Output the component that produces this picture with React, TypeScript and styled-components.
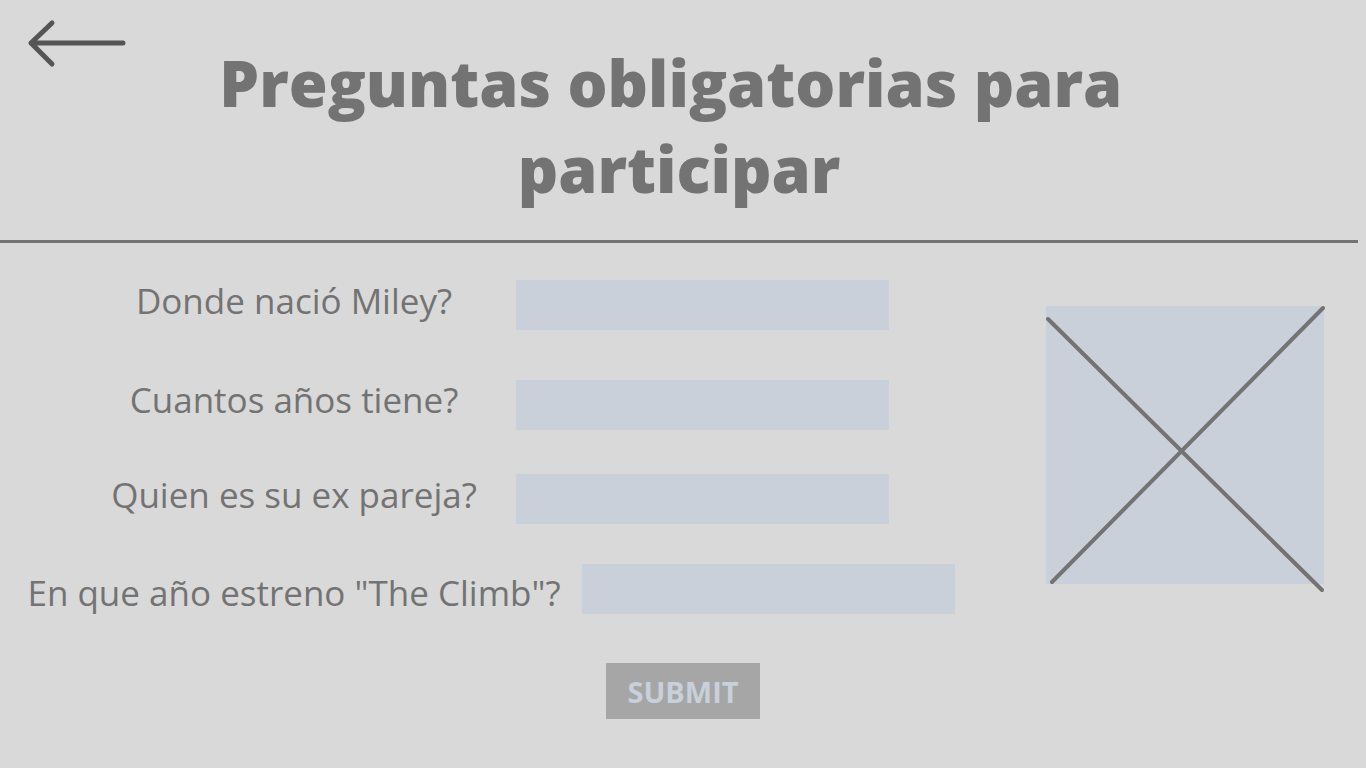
import React from "react";
import styled, { createGlobalStyle } from "styled-components";

const GlobalStyle = createGlobalStyle`
  html, body {
    margin: 0;
    padding: 0;
    background: #d9d9d9;
  }
  body {
    font-family: "Open Sans", "Liberation Sans", sans-serif;
  }
  * { box-sizing: border-box; }
`;

const Page = styled.div`
  width: 1366px;
  min-height: 768px;
  background: #d9d9d9;
  color: #737373;
  font-family: "Open Sans", "Liberation Sans", sans-serif;
  overflow: hidden;
`;

const Header = styled.header`
  display: grid;
  padding-top: 18px;
`;

const BackButton = styled.button`
  grid-area: 1 / 1;
  justify-self: start;
  align-self: start;
  margin-left: 25px;
  padding: 0;
  border: 0;
  background: none;
  cursor: pointer;
  width: 104px;
  height: 52px;
  display: block;
  svg { display: block; }
`;

const Title = styled.h1`
  grid-area: 1 / 1;
  margin: 22px 0 0;
  padding-right: 8px;
  text-align: center;
  font-family: "Open Sans", "Liberation Sans", sans-serif;
  font-weight: 800;
  font-size: 63px;
  line-height: 86px;
  color: #737373;
`;

const Divider = styled.hr`
  margin: 28px 0 0;
  width: 1358px;
  height: 3px;
  border: 0;
  background: #737373;
`;

const Main = styled.main`
  display: flex;
  align-items: flex-start;
`;

const Form = styled.div`
  flex: 0 0 auto;
  display: flex;
  flex-direction: column;
  padding-left: 78px;
`;

const Row = styled.div<{ $gap: number }>`
  display: flex;
  align-items: flex-start;
  height: 50px;
  margin-top: ${(p) => p.$gap}px;
`;

const Label = styled.label<{ $dy: number }>`
  flex: 0 0 432px;
  min-width: 0;
  display: flex;
  justify-content: center;
  white-space: nowrap;
  margin-top: ${(p) => p.$dy}px;
  font-size: 35px;
  line-height: 1;
  font-weight: 400;
  color: #737373;
`;

const Input = styled.input<{ $offset: number }>`
  flex: 0 0 373px;
  height: 50px;
  margin-left: ${(p) => p.$offset}px;
  border: 0;
  outline: none;
  padding: 0 12px;
  background: #c9d0d9;
  font-family: inherit;
  font-size: 22px;
  color: #555;
`;

const Placeholder = styled.div`
  position: relative;
  flex: 0 0 278px;
  height: 278px;
  margin-left: 91px;
  margin-top: 63px;
  background: #c9d0d9;
  svg {
    position: absolute;
    left: 0;
    top: 0;
    overflow: visible;
  }
`;

const Footer = styled.div`
  display: flex;
  justify-content: center;
  margin-top: 49px;
`;

const SubmitButton = styled.button`
  width: 154px;
  height: 56px;
  border: 0;
  background: #a6a6a6;
  color: #c8d0d9;
  font-family: "Open Sans", "Liberation Sans", sans-serif;
  font-weight: 700;
  font-size: 29px;
  line-height: 1;
  padding: 0;
  cursor: pointer;
`;

const questions = [
  { label: "Donde nació Miley?", gap: 37, dy: 3, offset: 6 },
  { label: "Cuantos años tiene?", gap: 50, dy: 2, offset: 6 },
  { label: "Quien es su ex pareja?", gap: 44, dy: 3, offset: 6 },
  { label: 'En que año estreno "The Climb"?', gap: 40, dy: 11, offset: 72 },
];

export default function App() {
  return (
    <Page>
      <GlobalStyle />
      <Header>
        <BackButton aria-label="Volver">
          <svg width="104" height="52" viewBox="25 18 104 52">
            <path
              d="M123 43 H31 M52 23 L31 43 L52 64"
              fill="none"
              stroke="#555555"
              strokeWidth="5"
              strokeLinecap="round"
              strokeLinejoin="round"
            />
          </svg>
        </BackButton>
        <Title>
          Preguntas obligatorias para{"\u00a0"}
          <br />
          participar
        </Title>
      </Header>
      <Divider />
      <Main>
        <Form>
          {questions.map((q) => (
            <Row key={q.label} $gap={q.gap}>
              <Label $dy={q.dy}>{q.label}</Label>
              <Input $offset={q.offset} aria-label={q.label} />
            </Row>
          ))}
        </Form>
        <Placeholder>
          <svg width="278" height="278" viewBox="0 0 278 278">
            <path
              d="M2 13 L276 284 M6 276 L277 2"
              fill="none"
              stroke="#737373"
              strokeWidth="4"
              strokeLinecap="round"
            />
          </svg>
        </Placeholder>
      </Main>
      <Footer>
        <SubmitButton>SUBMIT</SubmitButton>
      </Footer>
    </Page>
  );
}
